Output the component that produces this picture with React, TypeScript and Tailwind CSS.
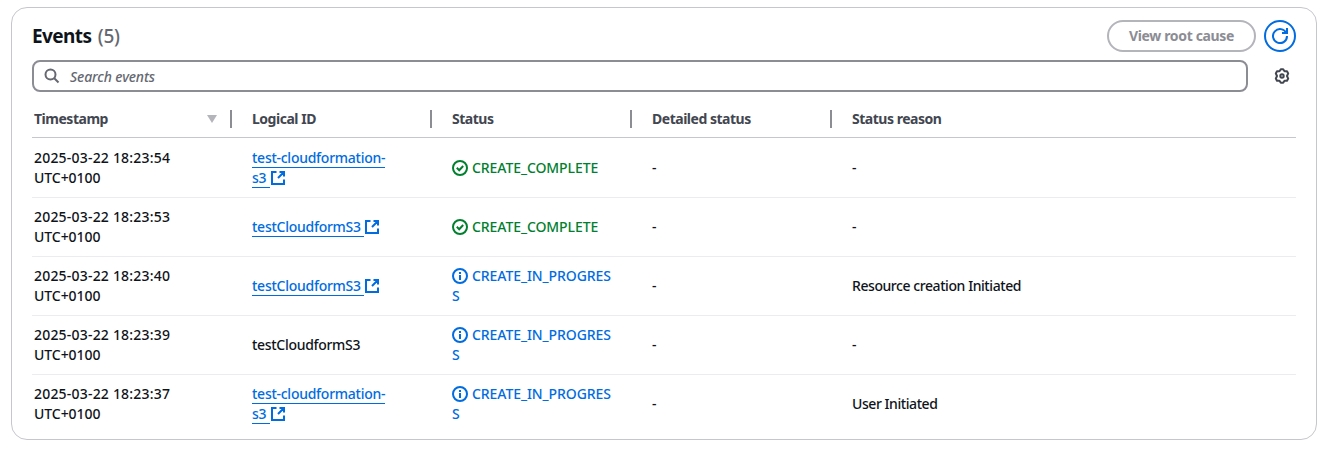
import React from "react";

type Status = "CREATE_COMPLETE" | "CREATE_IN_PROGRESS";

interface StackEvent {
  time: string;
  id: string;
  link: boolean;
  status: Status;
  reason: string;
}

const events: StackEvent[] = [
  { time: "2025-03-22 18:23:54", id: "test-cloudformation-s3", link: true, status: "CREATE_COMPLETE", reason: "-" },
  { time: "2025-03-22 18:23:53", id: "testCloudformS3", link: true, status: "CREATE_COMPLETE", reason: "-" },
  { time: "2025-03-22 18:23:40", id: "testCloudformS3", link: true, status: "CREATE_IN_PROGRESS", reason: "Resource creation Initiated" },
  { time: "2025-03-22 18:23:39", id: "testCloudformS3", link: false, status: "CREATE_IN_PROGRESS", reason: "-" },
  { time: "2025-03-22 18:23:37", id: "test-cloudformation-s3", link: true, status: "CREATE_IN_PROGRESS", reason: "User Initiated" },
];

function Icon({ className = "", children }: { className?: string; children: React.ReactNode }) {
  return (
    <svg viewBox="0 0 16 16" className={`size-4 shrink-0 fill-none stroke-current stroke-2 ${className}`}>
      {children}
    </svg>
  );
}

function ExternalIcon() {
  return (
    <Icon className="inline-block align-[-3px]">
      <path d="M9.5 2H14v4.5M8 8l6-6M14 9.5V14H2V2h4.5" />
    </Icon>
  );
}

function LogicalId({ event }: { event: StackEvent }) {
  if (!event.link) return <span className="tracking-[-0.3px]">{event.id}</span>;
  return (
    <a href="#" className="text-[#006ce0]">
      <span className="border-b border-[#006ce0] tracking-[-0.26px]">{event.id}&nbsp;</span>
      <ExternalIcon />
    </a>
  );
}

function StatusCell({ status }: { status: Status }) {
  const done = status === "CREATE_COMPLETE";
  return (
    <span className={`tracking-[-0.08px] break-all ${done ? "text-[#00802f]" : "text-[#006ce0]"}`}>
      <Icon className="mr-1 inline-block align-[-3px]">
        <circle cx="8" cy="8" r="7" />
        {done ? <path d="m4.8 7.8 2.4 2.4 4-4.2" /> : <path d="M8 12V7M8 6V4" />}
      </Icon>
      {status}
    </span>
  );
}

function HeaderCell({ label, divider = true }: { label: string; divider?: boolean }) {
  return (
    <div className={`flex h-[18px] items-center pl-5 ${divider ? "border-r-2 border-[#8c8c94]" : ""}`}>{label}</div>
  );
}

const columns = "grid grid-cols-[200px_200px_200px_200px_1fr]";

export default function App() {
  return (
    <main className="h-[457px] bg-white pt-[7px] pl-[11px] font-['Noto_Sans',sans-serif] text-sm text-[#0f141a]">
      <section className="h-[433px] w-[1306px] rounded-2xl border border-[#c6c6cd] px-5 pt-3">
        <header className="flex h-8 items-center">
          <h2 className="grow pt-0.5 text-[19px] font-bold tracking-[-0.6px]">
            Events <span className="ml-0.5 font-medium tracking-[-0.2px] text-[#656871]">(5)</span>
          </h2>
          <button className="h-8 w-[149px] rounded-full border-2 border-[#b4b4bb] font-bold tracking-[-0.35px] text-[#8c8c94]">
            View root cause
          </button>
          <button className="ml-2 flex size-8 items-center justify-center rounded-full border-2 border-[#006ce0] text-[#006ce0]">
            <Icon>
              <path d="M10 5h5V0M15 8a7 7 0 1 1-.7-3" />
            </Icon>
          </button>
        </header>
        <div className="mt-2 flex items-center">
          <div className="flex h-8 w-[1216px] items-center rounded-lg border-2 border-[#8c8c94] pl-[10px] text-[#656871]">
            <Icon>
              <circle cx="6.5" cy="6.5" r="5" />
              <path d="m14.5 14.5-4.5-4.5" />
            </Icon>
            <span className="ml-[10px] pt-0.5 font-medium italic tracking-[-0.12px]">Search events</span>
          </div>
          <Icon className="ml-[26px] text-[#424650]">
            <path
              strokeLinejoin="round"
              d="M6.8 1.3h2.4l1.3 2 2.5-.1 1.2 2.2L13 8l1.2 2.6-1.2 2.2-2.5-.1-1.3 2H6.8l-1.3-2-2.5.1-1.2-2.2L3 8 1.8 5.4 3 3.2l2.5.1Z"
            />
            <circle cx="8" cy="8" r="1.7" />
          </Icon>
        </div>
        <div className={`${columns} h-[46px] items-center border-b border-[#c6c6cd] pt-2 font-bold tracking-[-0.48px] text-[#424650]`}>
          <div className="flex h-[18px] items-center justify-between border-r-2 border-[#8c8c94] pr-[10px] pl-0.5">
            Timestamp
            <svg viewBox="0 0 16 16" className="size-4 fill-[#b4b4bb]">
              <path d="M3 4h10l-5 8Z" />
            </svg>
          </div>
          <HeaderCell label="Logical ID" />
          <HeaderCell label="Status" />
          <HeaderCell label="Detailed status" />
          <HeaderCell label="Status reason" divider={false} />
        </div>
        {events.map((event, i) => (
          <div
            key={event.time}
            className={`${columns} items-center border-[#ebebf0] font-medium leading-5 ${i === 0 ? "h-[60px]" : i === 4 ? "h-[58px]" : "h-[59px]"} ${i < 4 ? "border-b" : ""}`}
          >
            <div className="w-[170px] pl-0.5 tracking-[0.2px]">
              {event.time} <span className="tracking-[-0.05px]">UTC+0100</span>
            </div>
            <div className="w-[164px] pl-5"><LogicalId event={event} /></div>
            <div className="w-[180px] pl-5"><StatusCell status={event.status} /></div>
            <div className="pl-5">-</div>
            <div className="pl-5 tracking-[-0.43px]">{event.reason}</div>
          </div>
        ))}
      </section>
    </main>
  );
}
